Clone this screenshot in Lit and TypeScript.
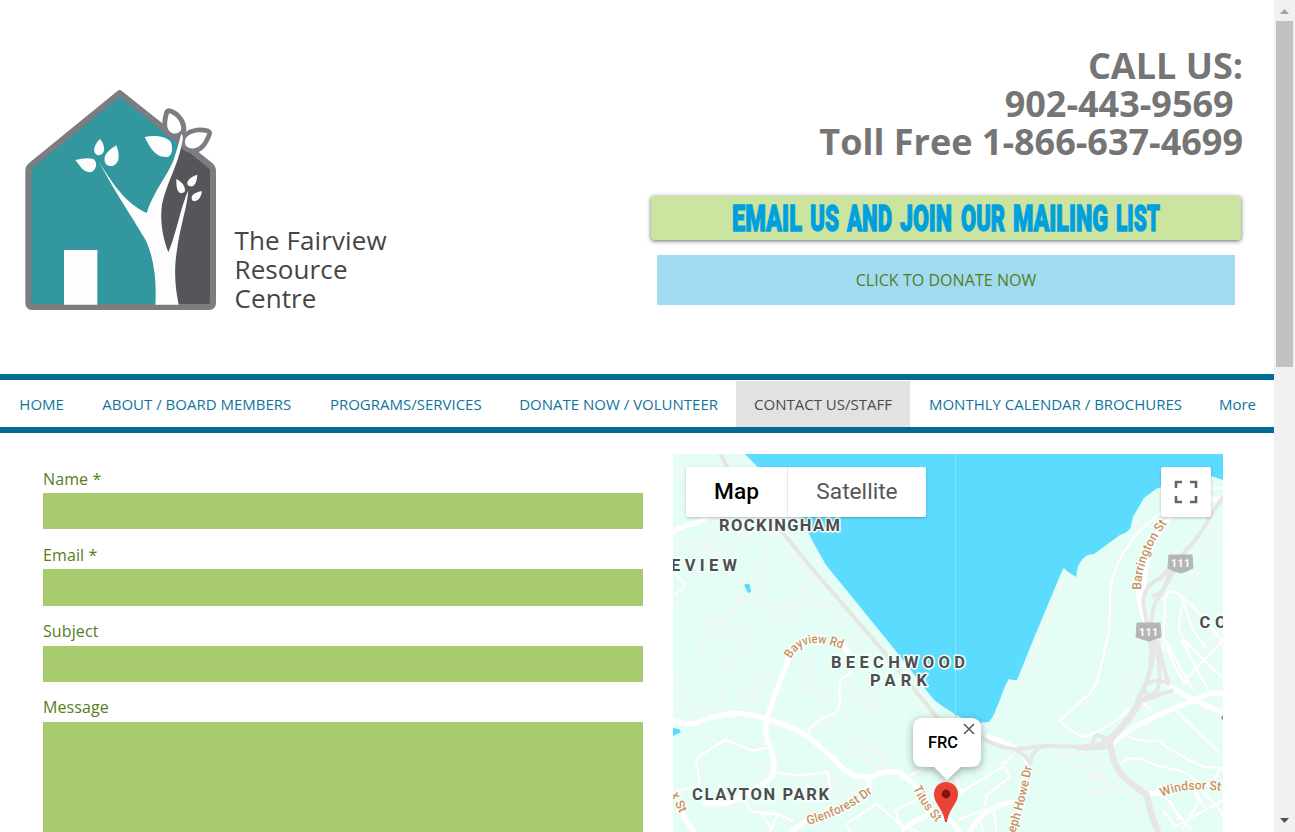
import { LitElement, html, svg, css } from "lit";
import { customElement } from "lit/decorators.js";

@customElement("house-logo")
class HouseLogo extends LitElement {
  static styles = css`
    :host { display: block; width: 220px; height: 240px; }
    svg { display: block; }
  `;
  render() {
    return html`<svg width="220" height="240" viewBox="0 0 660 720">
      <path d="M329 39 L56 262 V668 Q56 681 70 681 H594 Q608 681 608 668 V262 Z" fill="#32979e"/>
      <path d="M512 195 L600 268 V673 H506 Q488 600 502 500 L475 517 Q440 420 462 345 Q485 270 512 195Z" fill="#56555a"/>
      <path d="M329 39 L62 257 Q55 263 55 272 V668 Q55 681 70 681 H594 Q609 681 609 668 V272 Q609 263 602 257 Z" fill="none" stroke="#7b7d81" stroke-width="18" stroke-linejoin="round"/>
      <path d="M477 100 C500 106 515 130 514 148 C508 162 494 163 484 158 C466 148 471 122 477 100Z" fill="#fff" stroke="#7b7d81" stroke-width="30" stroke-linejoin="round"/>
      <path d="M592 160 C568 153 535 158 526 178 C520 198 536 208 553 205 C574 202 584 180 592 160Z" fill="#fff" stroke="#7b7d81" stroke-width="28" stroke-linejoin="round"/>
      <path d="M477 100 C500 106 515 130 514 148 C508 162 494 163 484 158 C466 148 471 122 477 100Z M592 160 C568 153 535 158 526 178 C520 198 536 208 553 205 C574 202 584 180 592 160Z" fill="#fff"/>
      <path d="M266 242 C300 300 345 370 410 399 C430 335 470 290 490 242 Q502 206 514 162 Q522 166 516 190 C504 255 470 310 456 372 C448 425 460 478 475 517 C500 460 512 380 535 331 C532 380 510 440 501 510 C490 570 496 625 506 674 H436 C440 610 434 540 408 482 C360 400 310 330 266 242Z" fill="#fdfdfd"/>
      <path d="M162 510H262V674H162Z M196 240 Q230 232 250 237 C264 246 260 270 244 276 C220 280 210 256 196 240Z M270 177 C288 198 286 224 266 226 C245 222 250 195 270 177Z M319 196 C331 228 328 251 307 258 C287 260 279 244 286 226 Q294 211 319 196Z M404 171 C430 165 465 167 482 185 C489 200 488 225 475 230 C440 236 422 208 404 171Z M499 297 C518 306 530 325 523 337 C508 344 498 335 499 297Z M562 284 C561 306 553 322 540 319 C523 313 534 292 562 284Z M576 334 C573 352 564 366 550 363 C538 354 547 337 576 334Z" fill="#fdfdfd"/>
    </svg>`;
  }
}

@customElement("area-map")
class AreaMap extends LitElement {
  static styles = css`
    :host { display: block; position: relative; width: 550px; height: 378px; overflow: hidden; font-family: Roboto, sans-serif; }
    svg { display: block; }
    .area { font: 700 16.500px Roboto, sans-serif; fill: #4e4e50; stroke: #f5fffb; stroke-width: 3px; paint-order: stroke; stroke-linejoin: round; }
    .road { font: 500 12.600px Roboto, sans-serif; fill: #cb9062; stroke: #f8fffc; stroke-width: 2.5px; paint-order: stroke; }
    .route { font: 700 10.500px Roboto, sans-serif; fill: #fff; letter-spacing: .5px; }
    .thin { fill: none; stroke: #f6f7f5; stroke-width: 5; stroke-linejoin: round; }
    .mid { fill: none; stroke: #fff; stroke-width: 8; stroke-linejoin: round; filter: drop-shadow(0 0 1px #dfe5e2); }
    .wide { fill: none; stroke: #fff; stroke-width: 17; stroke-linejoin: round; stroke-linecap: round; filter: drop-shadow(0 0 1px #dfe5e2); }
    .hwy { fill: none; stroke: #e5e6e5; stroke-width: 12; stroke-linejoin: round; }
    .trunk { stroke-width: 20; }
    .types { position: absolute; left: 13px; top: 13px; display: flex; height: 50px; width: 240px; background: #fff; border-radius: 2px; box-shadow: 0 1px 3px rgba(0,0,0,.25); font-size: 22.700px; line-height: 49px; text-align: center; color: #565656; overflow: hidden; }
    .current { width: 101px; color: #000; font-weight: 500; border-right: 1px solid #e9e9e9; }
    .other { flex: 1; }
    .full { position: absolute; right: 12px; top: 13px; width: 50px; height: 50px; background: #fff; border-radius: 2px; box-shadow: 0 1px 3px rgba(0,0,0,.25); }
    .bubble { filter: drop-shadow(0 2px 4px rgba(0,0,0,.35)); }
    .place { font: 500 16px Roboto, sans-serif; fill: #000; }
  `;
  render() {
    return html`
      <svg width="550" height="378" viewBox="673 454 550 378">
        <defs>
          <path id="bayview" d="M791 659 Q804 632 847 651"/>
          <path id="barr" d="M1141 590 Q1141 555 1172 517"/>
          <path id="glen" d="M808 825 Q850 813 880 787"/>
          <path id="titus" d="M913 788 Q921 807 942 828"/>
          <path id="howe" d="M1015 833 Q1026 802 1034 755"/>
          <path id="windsor" d="M1162 797 Q1187 785 1228 792"/>
        </defs>
        <path fill="#e5fef5" d="M673 454H1223V832H673Z"/>
        <path fill="#5bdcff" d="M745 454 L795 505 L813 542 L826 565 L895 650 L934 700 Q955 716 973 723 L989 722 Q993 717 995 712 L1006 684 L1009 679 L1013 680 L1017 680 L1034 638 L1062 571 L1064 568 L1067 571 L1076 577 L1078 566 Q1083 557 1088 555 L1094 554 L1120 535 Q1130 532 1131 526 L1133 517 L1144 498 L1156 489 L1161 487 L1211 476 L1223 480 V454Z M744 585Q748 582 750 585L751 592 L748 593Z M673 728 L679 729 L681 732 L673 736Z"/>
        <path d="M955.5 454V722" stroke="#82e4ff" fill="none"/>
        ${this.roads()}
        ${this.labels()}
        <g class="bubble"><path fill="#fff" d="M923 718H971Q981 718 981 728V757Q981 767 971 767H961L947 780L934 767H923Q913 767 913 757V728Q913 718 923 718Z"/></g>
        <text class="place" x="928" y="748" textLength="30" lengthAdjust="spacingAndGlyphs">FRC</text>
        <path d="M964 724L974 734M974 724L964 734" stroke="#555" stroke-width="1.5"/>
        <path d="M946 782C939 782 934 787 934 794C934 804 943 808 945 822H947C949 808 958 804 958 794C958 787 953 782 946 782Z" fill="#ea4335"/>
        <circle cx="946" cy="794" r="4.4" fill="#811411"/>
      </svg>
      <div class="types"><div class="current">Map</div><div class="other">Satellite</div></div>
      <div class="full"><svg width="50" height="50"><path d="M15 21V15H21M29 15H35V21M35 29V35H29M21 35H15V29" fill="none" stroke="#666" stroke-width="2.6"/></svg></div>
    `;
  }
  roads() {
    return svg`
      <g transform="translate(670 450) scale(.33333)">
        <path class="thin" d="M10 85Q48 55 50 12M10 45L48 103M70 12L98 45Q115 60 160 50M25 160L110 55M80 298L115 290Q145 265 120 250L140 200M190 202L225 260L340 180M225 260L132 323L75 370M132 323L50 265L10 290M140 320L85 265M350 240Q300 255 275 280Q290 320 285 360L288 410Q280 425 270 428M350 280Q330 300 350 310L365 335L378 325L350 280M375 300Q395 360 430 395Q430 410 390 412Q360 420 360 460L375 470L465 410M390 412L410 430M230 375Q235 350 270 362L286 385L284 410L262 418L246 380M230 375L214 402M192 402Q195 435 214 450L165 508L130 535Q105 545 118 510L72 468M118 510L165 508L180 520L165 545L92 575L95 600M214 450C265 455 310 475 340 475L375 460Q390 475 485 458Q470 480 500 475Q520 520 450 522L460 515M288 510Q350 520 355 505Q380 500 420 492L450 470M165 545L175 540L210 575L190 575L165 545M180 520L225 560L230 600M545 560Q570 565 565 600M330 585L300 600"/>
        <path class="mid" d="M10 365L45 400Q50 412 10 435"/>
        <path class="wide" d="M10 245Q40 225 70 222Q90 218 125 195" stroke-width="11"/>
        <path class="hwy" d="M150 12L200 100L340 250L445 378L620 580L840 850"/>
      </g>
      <g transform="translate(940 450) scale(.33333)">
        <path class="mid" d="M669 185C590 235 510 340 510 440L508 545L495 600M814 115H850M670 600L675 450Q675 425 705 425Q770 470 850 580M730 450L715 530L745 600M730 450Q750 545 805 600"/>
        <path class="thin" d="M372 385L300 570L285 600M555 540L570 557L600 560M740 435L790 335L850 210M735 390L760 370L735 350M745 410L770 428L790 410M820 350L845 310M800 225L850 280M785 265L825 310M765 310L795 325M815 230L835 230L850 245M790 480Q800 540 850 600M725 550L750 580M800 600L850 550"/>
        <path class="wide" d="M705 190C620 250 590 440 622 530M595 425Q600 480 622 530M800 148H850"/>
        <path class="hwy" d="M850 140Q820 180 790 235Q750 295 715 325L660 385Q610 405 610 460L635 600M740 295Q700 370 645 460Q630 500 632 600M700 345L670 415Q660 435 635 438"/>
      </g>
      <g transform="translate(670 640) scale(.33333)">
        <path class="thin" d="M95 0L93 15L170 80L225 40L240 0M170 80L75 115M10 120L45 160Q45 175 10 195M55 220Q110 200 120 195L125 220L105 240M137 127L158 160L150 185Q190 240 205 262M205 205L204 180L292 118L320 123M243 135L265 160L258 185M65 305L105 285L140 310M362 145L385 135L420 150L425 135L395 90M385 65L442 80M345 90L360 55L385 45M467 205L460 145Q430 130 380 165Q340 190 380 210L418 230M490 190L475 150M510 205L550 242M418 282Q470 230 510 265L515 268M510 328L560 315L610 260M560 310L575 350Q600 375 640 385L650 355L590 330Q590 300 620 345M480 380Q500 350 575 330M280 500L250 480Q155 425 135 370Q170 330 250 370L310 395M320 440L385 475L405 515M380 420L480 470L475 400L570 470M475 395L510 460L560 475M500 440Q500 460 460 475M585 160L620 210M640 100L680 165M530 120L575 200Q590 225 625 190L580 100M710 410L750 385"/>
        <path class="mid" d="M10 460Q50 440 95 445M88 445Q90 420 78 365L85 350L165 300L250 332L295 322M210 465L245 515L325 522L370 545M318 395Q380 415 470 395L485 450M550 95L515 115Q505 125 510 185Q510 215 480 225Q430 240 410 285M715 410L800 365M525 555L620 492L700 560L745 576M525 555L540 576M670 515L760 470L840 425M680 515Q680 540 700 560M275 520L300 560M325 520L300 576"/>
        <path class="wide" d="M10 240Q55 260 90 245Q160 215 235 222Q310 240 370 265C430 295 465 335 490 355Q540 420 600 410Q640 390 690 397L750 450M358 50C330 130 300 190 292 240Q280 275 300 320Q325 390 300 415Q270 440 220 465Q180 500 100 490M600 412Q600 430 595 455M25 500L70 576M430 525L365 576M700 568Q770 515 840 500" />
        <path class="wide" d="M510 15Q530 20 535 40"/>
      </g>
      <g transform="translate(940 640) scale(.33333)">
        <path class="thin" d="M297 0L238 155L335 198Q350 210 362 240M580 90L545 148L605 185M335 345L475 410L500 365Q450 345 380 335Q350 340 380 360L390 335M335 345L370 355M440 420Q480 410 500 425L500 450Q430 465 430 430L490 380M460 525Q455 460 485 450Q520 430 550 450Q590 480 605 510M540 420L530 445M55 370L125 335"/>
        <path class="mid" d="M500 0C480 90 475 130 450 160L362 240Q360 255 430 292Q510 265 570 205M675 0Q690 65 735 130M675 0L755 145M725 0Q760 75 800 140L810 165M850 0L730 125M730 0L850 115M540 260Q560 310 650 300Q720 350 790 380L850 385M540 375Q570 340 620 365Q660 380 710 390Q765 400 795 465Q840 500 850 530M700 205L840 340M670 465L755 570M670 510L705 560L850 480M720 540L690 480M790 500L755 430M755 440L780 480L725 570M800 465L840 385M55 540L130 510L210 490M45 410L65 455L190 380Q210 400 205 415Q180 435 140 465L135 500M60 460L105 430M185 375L220 345M160 500L170 576M120 535L130 576M605 185L640 215"/>
        <path class="wide" d="M145 290Q210 310 245 340L265 370M690 140L760 180L850 220M520 310Q560 260 760 182Q800 155 850 160M90 576Q130 500 210 488M630 460L665 460M0 520L35 545L60 576"/>
        <path class="hwy" d="M122 290Q160 320 225 328L310 318L430 320Q490 320 510 290Q570 250 600 170Q640 100 633 0M225 328Q265 350 272 375M310 318Q270 335 272 370M410 325L500 320M455 310L470 285L510 300M590 180Q645 100 640 0M585 190L650 155Q670 110 645 0M600 185L700 150M620 165L610 140Q640 110 685 130L650 0"/>
        <path class="hwy trunk" d="M430 322L490 320Q580 230 600 180M510 290Q510 360 545 405Q570 430 620 465Q630 520 655 576"/>
      </g>
    `;
  }
  labels() {
    return svg`
      <text class="area" x="719" y="531" textLength="121">ROCKINGHAM</text>
      <text class="area" x="671" y="571" textLength="66">EVIEW</text>
      <text class="area" x="831" y="668" textLength="134">BEECHWOOD</text>
      <text class="area" x="870" y="686" textLength="57">PARK</text>
      <text class="area" x="692" y="800" textLength="137">CLAYTON PARK</text>
      <text class="area" x="1199.500" y="628" textLength="27">CO</text>
      <text class="road"><textPath href="#bayview" textLength="58" lengthAdjust="spacingAndGlyphs">Bayview Rd</textPath></text>
      <text class="road"><textPath href="#barr" textLength="73" lengthAdjust="spacingAndGlyphs">Barrington St</textPath></text>
      <text class="road"><textPath href="#glen" textLength="73" lengthAdjust="spacingAndGlyphs">Glenforest Dr</textPath></text>
      <text class="road"><textPath href="#titus" textLength="42" lengthAdjust="spacingAndGlyphs">Titus St</textPath></text>
      <text class="road"><textPath href="#howe" textLength="69" lengthAdjust="spacingAndGlyphs">eph Howe Dr</textPath></text>
      <text class="road"><textPath href="#windsor" textLength="60" lengthAdjust="spacingAndGlyphs">Windsor St</textPath></text>
      <text class="road" transform="translate(671 794) rotate(66)">x St</text>
      <path d="M1169 555H1192L1193 568L1187 571L1181 573L1174 571L1168 568Z M1137 623H1160L1161 637L1155 639L1149 641L1142 639L1136 637Z" fill="#b5b5b5" stroke="#b5b5b5" stroke-linejoin="round"/>
      <text class="route" x="1171" y="567">111</text>
      <text class="route" x="1139" y="636">111</text>
      <path d="M1223 715L1221 718L1223 720" fill="#b98246"/>
    `;
  }
}

@customElement("app-root")
class AppRoot extends LitElement {
  static styles = css`
    :host { display: flex; width: 1295px; height: 832px; overflow: hidden; background: #fff; font-family: "Open Sans", sans-serif; }
    .page { width: 1274px; height: 832px; overflow: hidden; }
    .top { display: flex; justify-content: space-between; height: 374px; }
    .brand { display: flex; padding: 80px 0 0 10px; }
    .name { margin: 146px 0 0 4.500px; font-size: 26px; letter-spacing: .1px; line-height: 29px; color: #454545; white-space: nowrap; }
    .contact { width: 592px; margin-right: 31px; padding-top: 47px; }
    .phones { font-size: 36px; line-height: 38px; font-weight: 700; color: #757575; text-align: right; white-space: pre; }
    .mail { margin-top: 35px; width: 590px; height: 44px; background: #cbe49f; border-radius: 3px; box-shadow: 0 1px 4px rgba(0,0,0,.6); }
    .mail svg { display: block; }
    .shout { font: 900 37px Roboto, sans-serif; fill: #009fde; stroke: #009fde; stroke-width: 1.3px; }
    .donate { margin: 15px 0 0 6px; width: 578px; height: 50px; line-height: 50px; text-align: center; background: #a1dbf2; color: #557d1c; font-size: 16px; letter-spacing: .05px; }
    nav { box-sizing: border-box; height: 59px; border-top: 6px solid #016b93; border-bottom: 6px solid #016b93; display: flex; padding-top: 1px; font-size: 15px; line-height: 47px; color: #12749a; text-align: center; white-space: nowrap; }
    nav div { flex: none; }
    .on { background: #e2e2e2; color: #4a4a4a; }
    .body { display: flex; padding: 21px 0 0 43px; gap: 30px; }
    form { width: 600px; }
    label { display: flex; flex-direction: column; height: 76.300px; color: #557d1c; font-size: 16px; letter-spacing: .1px; line-height: 22px; }
    .text { flex: none; padding-top: 13.600px; height: 25.400px; }
    .box { flex: none; height: 36.300px; background: #a9cb70; }
    .area { height: 150px; }
    .bar { display: flex; flex-direction: column; align-items: center; width: 21px; background: #f1f1f1; }
    .thumb { width: 17px; height: 346px; margin-right: 1px; background: #c1c1c1; }
    .bar svg { display: block; margin-right: 1px; }
    .gap { flex: 1; }
  `;
  private items: [string, number][] = [
    ["HOME", 83.3], ["ABOUT / BOARD MEMBERS", 227], ["PROGRAMS/SERVICES", 191], ["DONATE NOW / VOLUNTEER", 234.7],
    ["CONTACT US/STAFF", 174], ["MONTHLY CALENDAR / BROCHURES", 291], ["More", 73],
  ];
  private shout: [string, number, number][] = [
    ["EMAIL", 81, 70], ["US", 159, 29], ["AND", 196, 45], ["JOIN", 249, 52], ["OUR", 310, 44], ["MAILING", 362, 95], ["LIST", 465, 44],
  ];
  render() {
    return html`
      <div class="page">
        <div class="top">
          <div class="brand"><house-logo></house-logo><div class="name">The Fairview<br>Resource<br>Centre</div></div>
          <div class="contact">
            <div class="phones">CALL US:
902-443-9569&nbsp;
Toll Free 1-866-637-4699</div>
            <div class="mail"><svg width="590" height="44">${this.shout.map(([t, x, w]) => svg`<text class="shout" x=${x} y="35" textLength=${w} lengthAdjust="spacingAndGlyphs">${t}</text>`)}</svg></div>
            <div class="donate">CLICK TO DONATE NOW</div>
          </div>
        </div>
        <nav>${this.items.map(([t, w]) => html`<div class=${t.startsWith("CONTACT") ? "on" : ""} style="width:${w}px">${t}</div>`)}</nav>
        <div class="body">
          <form>
            ${["Name *", "Email *", "Subject", "Message"].map((t) => html`<label><span class="text">${t}</span><span class="box ${t === "Message" ? "area" : ""}"></span></label>`)}
          </form>
          <area-map></area-map>
        </div>
      </div>
      <div class="bar">
        <svg width="17" height="21"><path d="M4 14L8.500 9L13 14Z" fill="#a3a3a3"/></svg>
        <div class="thumb"></div>
        <div class="gap"></div>
        <svg width="17" height="21"><path d="M4 7L8.500 12L13 7Z" fill="#505050"/></svg>
      </div>
    `;
  }
}
